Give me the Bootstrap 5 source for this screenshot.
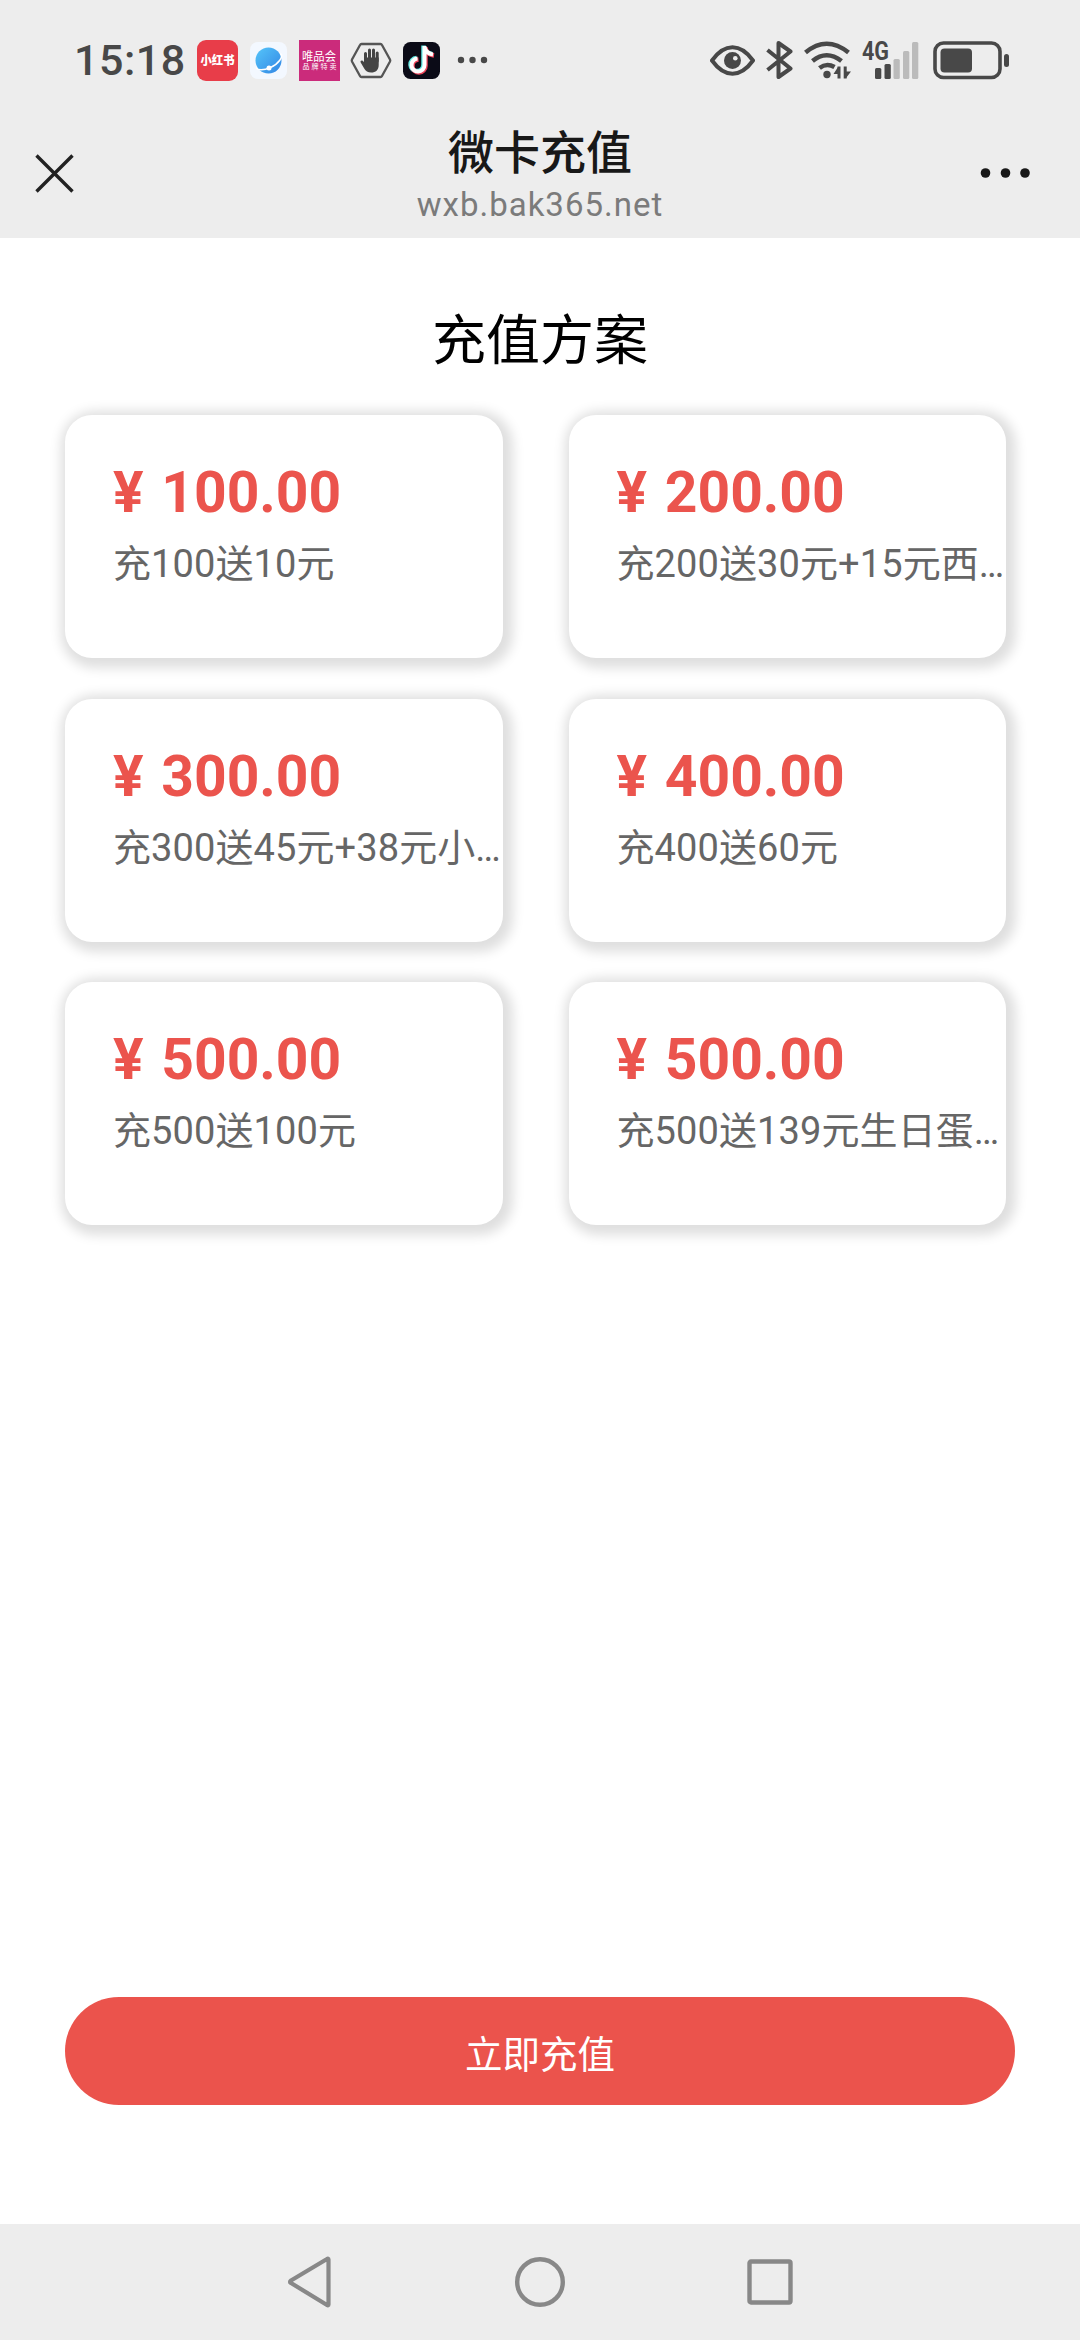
<!DOCTYPE html>
<html lang="zh-CN">
<head>
<meta charset="utf-8">
<meta name="viewport" content="width=device-width, initial-scale=1">
<title>微卡充值</title>
<link href="https://cdn.jsdelivr.net/npm/bootstrap@5.3.0/dist/css/bootstrap.min.css" rel="stylesheet">
<style>
  body { font-family: Roboto, "Noto Sans CJK SC", sans-serif; background: #fff; }
  svg { display: block; flex: none; }
  .screen { height: 2340px; width: 1080px; overflow: hidden; }
  .chrome { background: #ededed; }
  .status { height: 110px; padding: 10px 71px 0 74px; color: #484848; }
  .status-side { height: 100px; }
  .clock { width: 123px; font-size: 43px; line-height: 60px; font-weight: 500; letter-spacing: .5px; white-space: nowrap; }
  .titlebar { height: 128px; padding: 0 49px 0 35px; }
  .page-name { font-size: 46px; line-height: 54px; font-weight: 500; color: #181818; }
  .page-host { font-size: 33px; line-height: 40px; color: #7b7b7b; letter-spacing: 1px; margin-top: 5px; }
  .page-id { padding-top: 16px; margin-left: 26px; }
  .plans { padding: 64px 74px 0 65px; }
  .plans-title { font-size: 54px; line-height: 80px; color: #000; padding-left: 9px; margin-bottom: 33px; }
  .plan-grid { --bs-gutter-x: 66px; --bs-gutter-y: 40.5px; }
  .plan { height: 243px; border: 0; border-radius: 27px; padding: 45px 0 0 48px; box-shadow: 3px 3px 12px 7px #dfdfdf; }
  .price { font-size: 57px; line-height: 66px; font-weight: 700; color: #eb544d; white-space: nowrap; word-spacing: 3.5px; }
  .offer { font-size: 38px; line-height: 56px; color: #666; margin-top: 10px; white-space: nowrap; letter-spacing: .1px; }
  .pay { height: 108px; margin: 0 65px 119px; background: #eb534c; color: #fff; font-size: 37.5px; border: 0; padding: 8px 0 0; }
  .sysnav { height: 116px; padding: 0 287px 0 285px; }
</style>
</head>
<body>
<div class="screen d-flex flex-column">
  <header class="chrome">
    <div class="status d-flex align-items-start justify-content-between">
      <div class="status-side d-flex align-items-center">
        <span class="clock">15:18</span>
        <svg width="41" height="41" viewBox="197 40 41 41">
          <rect x="197" y="40" width="41" height="41" rx="9" fill="#e83d49"/>
          <text x="200.500" y="65" font-size="12" font-weight="900" fill="#fff" textLength="34" lengthAdjust="spacingAndGlyphs">小红书</text>
        </svg>
        <svg style="margin-left:12px" width="37" height="37" viewBox="250 42 37 37">
          <defs><linearGradient id="sky" x1="0" y1="0" x2="1" y2="1"><stop stop-color="#55c5fa"/><stop offset="1" stop-color="#3286e4"/></linearGradient></defs>
          <rect x="250" y="42" width="37" height="37" rx="8" fill="#f3f8ff"/>
          <circle cx="268.500" cy="60.500" r="13" fill="url(#sky)"/>
          <path d="M280.500 53.500c3.500 3-2 10.500-10 14-7 3-13 3-14.500 0" fill="none" stroke="#fff" stroke-width="1.500"/>
          <circle cx="269" cy="68" r="2.500" fill="#fff"/>
        </svg>
        <svg style="margin-left:12px" width="41" height="41" viewBox="299 40 41 41">
          <path d="M299 40h41v41h-41z" fill="#cb2b7b"/>
          <text x="302" y="60.500" font-size="12" fill="#fff" textLength="34" lengthAdjust="spacingAndGlyphs">唯品会</text>
          <text x="302.500" y="69" font-size="7" fill="#fff" textLength="34">品牌特卖</text>
        </svg>
        <svg style="margin-left:10px" width="42" height="37" viewBox="350 42 42 37">
          <path d="M361.500 44h19q1 0 1.500 1l8 14.500q.5 1 0 2L382 76q-.5 1-1.500 1h-19q-1 0-1.500-1l-8-14.500q-.5-1 0-2L360 45q.5-1 1.500-1z" fill="none" stroke="#555" stroke-width="2.300"/>
          <path d="M365.500 61v-7.500M369.500 59v-9M373.500 59v-9M377.200 61v-8" stroke="#444" stroke-width="3" stroke-linecap="round"/>
          <path d="M364 57.500h14.700V65c0 5-3 7.500-7.500 7.500-3.500 0-5.500-1.500-7-4l-3.500-6c-.8-1.600 1-2.700 2.200-1.500l1.100 1z" fill="#444"/>
        </svg>
        <svg style="margin-left:11px" width="37" height="37" viewBox="403 42 37 37">
          <rect x="403" y="42" width="37" height="37" rx="7.500" fill="#0b0b17"/>
          <g fill="none" stroke-width="4.500">
            <path d="M424.500 46v19a6.500 6.500 0 1 1-7-6.500M424.500 47q1.500 6.500 8.500 7.500" stroke="#5fe6e2" transform="translate(-1 -.5)"/>
            <path d="M424.500 46v19a6.500 6.500 0 1 1-7-6.500M424.500 47q1.500 6.500 8.500 7.500" stroke="#ec4459" transform="translate(1 1)"/>
            <path d="M424.500 46v19a6.500 6.500 0 1 1-7-6.500M424.500 47q1.500 6.500 8.500 7.500" stroke="#fff" stroke-width="4"/>
          </g>
        </svg>
        <svg style="margin-left:17px" width="31" height="8" viewBox="457 55.500 31 8" fill="#484848"><circle cx="461" cy="59.500" r="3.200"/><circle cx="472.500" cy="59.500" r="3.200"/><circle cx="484" cy="59.500" r="3.200"/></svg>
      </div>
      <div class="status-side d-flex align-items-center">
        <svg width="46" height="31" viewBox="710 44 46 31">
          <path d="M712 59.500q9.500-13.200 20.500-13.200t20.500 13.200q-9.500 13.200-20.500 13.200t-20.500-13.200z" fill="none" stroke="#484848" stroke-width="4" stroke-linejoin="round"/>
          <circle cx="732.500" cy="59.500" r="8.500" fill="#484848"/><circle cx="735.300" cy="57.300" r="2.300" fill="#ededed"/>
        </svg>
        <svg style="margin-left:10px" width="28" height="38" viewBox="766 40.500 28 38"><path d="M767.500 49.500l23 18.500-12 8.500v-34l12 8.500-23 18.500" fill="none" stroke="#484848" stroke-width="4" stroke-linejoin="round"/></svg>
        <svg style="margin-left:9px" width="49" height="39" viewBox="803 40 49 39">
          <g fill="none" stroke="#484848" stroke-width="4.600"><path d="M805.500 51.500q21-17.500 43 0M812.500 60q14-11.500 29 0M819.500 67q7-5.500 15-1"/></g>
          <circle cx="827" cy="73.500" r="3.700" fill="#484848"/>
          <path d="M839 65.500v12M845.200 65.500v12" stroke="#484848" stroke-width="3"/><path d="M838 66l-4.500 7h4.500zM846 77l5-6.500h-5z" fill="#484848"/>
        </svg>
        <svg style="margin-left:9px" width="60" height="60" viewBox="861 29 60 60">
          <text x="862" y="59" font-size="25" font-weight="700" fill="#484848" textLength="27" lengthAdjust="spacingAndGlyphs">4G</text>
          <g fill="#484848"><rect x="875" y="67" width="6.300" height="11" rx="1.500"/><rect x="884.500" y="63" width="6.300" height="15" rx="1.500"/></g>
          <g fill="#bbb"><rect x="893.500" y="58" width="6.300" height="20" rx="1.500"/><rect x="903" y="50" width="6.300" height="28" rx="1.500"/><rect x="912" y="41" width="6.300" height="37" rx="1.500"/></g>
        </svg>
        <svg style="margin-left:12px" width="76" height="39" viewBox="933 40 76 39">
          <rect x="935" y="42" width="65" height="34.500" rx="8.500" fill="none" stroke="#484848" stroke-width="3.600"/>
          <rect x="940.500" y="47.500" width="31.500" height="24" rx="4" fill="#484848"/><rect x="1004" y="53" width="5" height="13" rx="2.500" fill="#484848"/>
        </svg>
      </div>
    </div>
    <nav class="titlebar d-flex justify-content-between">
      <svg style="margin-top:44px" width="39" height="39" viewBox="0 0 39 39"><path d="M1.500 1.500l36 36M37.500 1.500l-36 36" stroke="#222" stroke-width="3.400"/></svg>
      <div class="page-id text-center">
        <div class="page-name">微卡充值</div>
        <div class="page-host">wxb.bak365.net</div>
      </div>
      <svg style="margin-top:58px" width="51" height="10" viewBox="0 0 51 10" fill="#181818"><circle cx="5.500" cy="5" r="4.800"/><circle cx="25.500" cy="5" r="4.800"/><circle cx="45" cy="5" r="4.800"/></svg>
    </nav>
  </header>
  <main class="plans flex-grow-1">
    <h1 class="plans-title text-center fw-normal mt-0">充值方案</h1>
    <div class="row row-cols-2 plan-grid">
      <div class="col"><div class="card plan"><div class="price">¥ 100.00</div><div class="offer">充100送10元</div></div></div>
      <div class="col"><div class="card plan"><div class="price">¥ 200.00</div><div class="offer">充200送30元+15元西…</div></div></div>
      <div class="col"><div class="card plan"><div class="price">¥ 300.00</div><div class="offer">充300送45元+38元小…</div></div></div>
      <div class="col"><div class="card plan"><div class="price">¥ 400.00</div><div class="offer">充400送60元</div></div></div>
      <div class="col"><div class="card plan"><div class="price">¥ 500.00</div><div class="offer">充500送100元</div></div></div>
      <div class="col"><div class="card plan"><div class="price">¥ 500.00</div><div class="offer">充500送139元生日蛋…</div></div></div>
    </div>
  </main>
  <button class="btn rounded-pill pay flex-shrink-0" type="button">立即充值</button>
  <footer class="chrome sysnav d-flex align-items-center justify-content-between flex-shrink-0">
    <svg width="48" height="52" viewBox="285 2256 48 52"><path d="M328.500 2259.500v45q0 1.500-1.500.5l-36-22q-2-1 0-2.500l36-21.500q1.500-1 1.500.5z" fill="none" stroke="#888" stroke-width="4.200" stroke-linejoin="round"/></svg>
    <svg width="52" height="52" viewBox="0 0 52 52"><circle cx="26" cy="26" r="22.800" fill="none" stroke="#888" stroke-width="4.400"/></svg>
    <svg width="46" height="46" viewBox="0 0 46 46"><rect x="2.500" y="2.500" width="41" height="41" rx="1.500" fill="none" stroke="#888" stroke-width="4.400"/></svg>
  </footer>
</div>
<script src="https://cdn.jsdelivr.net/npm/bootstrap@5.3.0/dist/js/bootstrap.bundle.min.js"></script>
</body>
</html>
